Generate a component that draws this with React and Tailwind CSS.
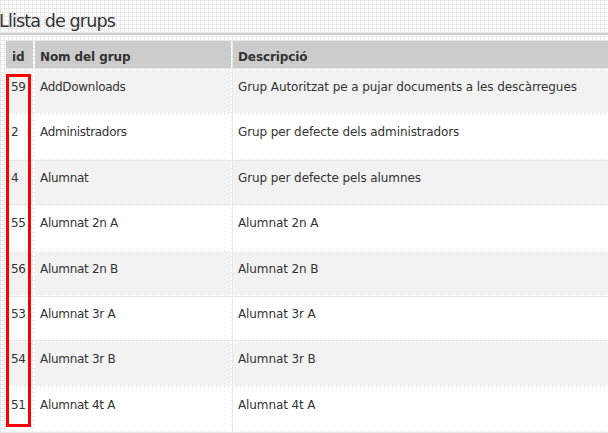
import React from 'react'

const groups = [
  { id: 59, name: 'AddDownloads', desc: 'Grup Autoritzat pe a pujar documents a les descàrregues' },
  { id: 2, name: 'Administradors', desc: 'Grup per defecte dels administradors' },
  { id: 4, name: 'Alumnat', desc: 'Grup per defecte pels alumnes' },
  { id: 55, name: 'Alumnat 2n A', desc: 'Alumnat 2n A' },
  { id: 56, name: 'Alumnat 2n B', desc: 'Alumnat 2n B' },
  { id: 53, name: 'Alumnat 3r A', desc: 'Alumnat 3r A' },
  { id: 54, name: 'Alumnat 3r B', desc: 'Alumnat 3r B' },
  { id: 51, name: 'Alumnat 4t A', desc: 'Alumnat 4t A' },
]

function App() {
  return (
    <div className="relative w-[608px] h-[433px] overflow-hidden bg-white bg-[linear-gradient(to_right,#e8e8e8_1px,transparent_1px),linear-gradient(to_bottom,#e8e8e8_1px,transparent_1px)] bg-[size:4px_4px] font-['DejaVu_Sans',sans-serif] text-[#333]">
      <h2 className="-ml-[1px] pt-[10px] pb-[1px] text-[17.6px] leading-[22px] tracking-[-0.9px] border-b-2 border-[#ccc]">
        Llista de grups
      </h2>

      <table className="mt-[4px] ml-[4px] table-fixed border-separate border-spacing-[2px] w-[651px] text-[12px] leading-[14px]">
        <colgroup>
          <col className="w-[27px]" />
          <col className="w-[196px]" />
          <col />
        </colgroup>
        <thead>
          <tr>
            <th className="bg-[#ccc] text-left font-bold pl-[6px] pt-[9px] pb-[4px] tracking-[-0.1px]">id</th>
            <th className="bg-[#ccc] text-left font-bold pl-[5px] pt-[9px] pb-[4px] tracking-[-0.1px]">Nom del grup</th>
            <th className="bg-[#ccc] text-left font-bold pl-[5px] pt-[9px] pb-[4px] tracking-[-0.1px]">Descripció</th>
          </tr>
        </thead>
        <tbody>
          {groups.map((g, i) => (
            <tr key={g.id} className={i % 2 === 0 ? 'bg-[#f2f2f2]' : 'bg-white'}>
              <td className="h-[43.4px] align-top pl-[5px] pt-[10px] tracking-[-0.3px]">{g.id}</td>
              <td className="h-[43.4px] align-top pl-[5px] pt-[10px] tracking-[-0.3px] whitespace-nowrap">{g.name}</td>
              <td className="h-[43.4px] align-top pl-[5px] pt-[10px] tracking-[-0.1px] whitespace-nowrap">{g.desc}</td>
            </tr>
          ))}
        </tbody>
      </table>

      {/* highlight round the id column */}
      <div className="absolute left-[6px] top-[74px] w-[25px] h-[353px] border-[3px] border-[#f00]" />
    </div>
  )
}

export default App
